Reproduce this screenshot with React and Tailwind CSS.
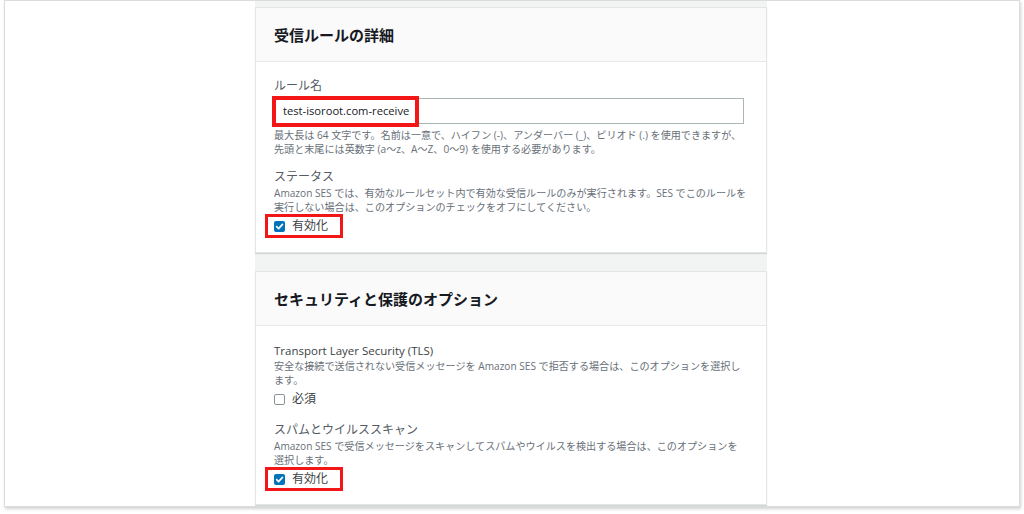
import React from "react";

const FONT = { fontFamily: '"Open Sans", "Noto Sans CJK JP", sans-serif' };

function CheckedBox() {
  return (
    <span className="flex h-[11px] w-[11px] items-center justify-center rounded-[2px] bg-[#0073bb]">
      <svg width="9" height="9" viewBox="0 0 10 10">
        <path d="M1.8 5.2 L4 7.4 L8.3 2.6" fill="none" stroke="#fff" strokeWidth="1.8" strokeLinecap="round" strokeLinejoin="round" />
      </svg>
    </span>
  );
}

function UncheckedBox() {
  return <span className="block h-[11px] w-[11px] rounded-[2px] border border-[#879596] bg-white" />;
}

function RedCheck({ label }) {
  return (
    <div className="-ml-[9px] flex h-[24px] w-fit items-center gap-[7px] border-[3px] border-[#f21616] pl-[6px] pr-[12px]">
      <CheckedBox />
      <span className="text-[12px] leading-[16px] text-[#3b3f44]">{label}</span>
    </div>
  );
}

function Card({ title, children }) {
  return (
    <div className="border border-[#e3e6e8] bg-white shadow-[0_1px_1px_rgba(0,0,0,0.12)]">
      <div className="flex h-[54px] items-center border-b border-[#e6e8ea] bg-[#fafafa] px-[18px]">
        <h2 className="text-[15px] font-bold leading-[20px] text-[#16191f]">{title}</h2>
      </div>
      <div className="px-[18px]">{children}</div>
    </div>
  );
}

function Desc({ className = "", children }) {
  return (
    <p className={"whitespace-nowrap text-[10.1px] leading-[14px] text-[#687078] " + className}>{children}</p>
  );
}

export default function App() {
  return (
    <div className="h-[514px] w-[1024px] overflow-hidden bg-white" style={FONT}>
      <div className="ml-[4px] flex h-[507px] w-[1016px] justify-center overflow-hidden border border-[#dadcdd] bg-white shadow-[1px_2px_3px_rgba(0,0,0,0.18)]">
        <div className="ml-[-2px] flex h-full w-[512px] flex-col gap-[18px] bg-[#f2f3f3] pt-[6px]">
          <Card title="受信ルールの詳細">
            <div className="pt-[16px] pb-[14px]">
              <div className="text-[12px] leading-[16px] text-[#545b64]">ルール名</div>
              <div className="relative mt-[4px] flex h-[26px] w-[470px] items-center border border-[#aab7b8] bg-white pl-[8px]">
                <span className="text-[11.2px] text-[#16191f]">test-isoroot.com-receive</span>
                <span className="pointer-events-none absolute left-[-3px] top-[-3px] h-[31px] w-[147px] border-[4px] border-[#f21616]" />
              </div>
              <Desc className="mt-[4px]">
                最大長は 64 文字です。名前は一意で、ハイフン (-)、アンダーバー (_)、ピリオド (.) を使用できますが、
                <br />
                先頭と末尾には英数字 (a～z、A～Z、0～9) を使用する必要があります。
              </Desc>
              <div className="mt-[13px] text-[12px] leading-[16px] text-[#545b64]">ステータス</div>
              <Desc className="mt-[1px]">
                Amazon SES では、有効なルールセット内で有効な受信ルールのみが実行されます。SES でこのルールを
                <br />
                実行しない場合は、このオプションのチェックをオフにしてください。
              </Desc>
              <RedCheck label="有効化" />
            </div>
          </Card>
          <Card title="セキュリティと保護のオプション">
            <div className="pt-[17px] pb-[13px]">
              <div className="text-[11.5px] leading-[16px] text-[#3b3f44]">Transport Layer Security (TLS)</div>
              <Desc>
                安全な接続で送信されない受信メッセージを Amazon SES で拒否する場合は、このオプションを選択し
                <br />
                ます。
              </Desc>
              <div className="mt-[2px] flex h-[20px] items-center gap-[7px]">
                <UncheckedBox />
                <span className="text-[12px] leading-[16px] text-[#3b3f44]">必須</span>
              </div>
              <div className="mt-[13px] text-[12px] leading-[16px] text-[#545b64]">スパムとウイルススキャン</div>
              <Desc className="mt-[1px]">
                Amazon SES で受信メッセージをスキャンしてスパムやウイルスを検出する場合は、このオプションを
                <br />
                選択します。
              </Desc>
              <RedCheck label="有効化" />
            </div>
          </Card>
        </div>
      </div>
    </div>
  );
}
